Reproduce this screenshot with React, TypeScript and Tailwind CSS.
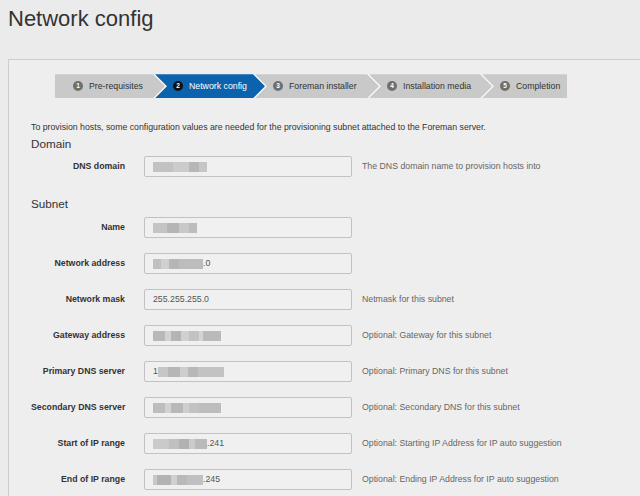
import React from "react"

type Seg = [number, string]

// pixelated (redacted) part of a value
const Blur: React.FC<{ segs: Seg[] }> = ({ segs }) => (
  <span className="inline-flex h-[10px] items-stretch">
    {segs.map(([w, c], i) => (
      <span key={i} className="h-full" style={{ width: w, backgroundColor: c }} />
    ))}
  </span>
)

const steps = [
  {
    n: 1,
    label: "Pre-requisites",
    cls: "w-[110px] [clip-path:polygon(0_0,calc(100%_-_12px)_0,100%_50%,calc(100%_-_12px)_100%,0_100%)]",
  },
  {
    n: 2,
    label: "Network config",
    active: true,
    cls: "w-[110px] -ml-[10px] [clip-path:polygon(0_0,calc(100%_-_12px)_0,100%_50%,calc(100%_-_12px)_100%,0_100%,12px_50%)]",
  },
  {
    n: 3,
    label: "Foreman installer",
    cls: "w-[124px] -ml-[10px] [clip-path:polygon(0_0,calc(100%_-_12px)_0,100%_50%,calc(100%_-_12px)_100%,0_100%,12px_50%)]",
  },
  {
    n: 4,
    label: "Installation media",
    cls: "w-[123px] -ml-[10px] [clip-path:polygon(0_0,calc(100%_-_12px)_0,100%_50%,calc(100%_-_12px)_100%,0_100%,12px_50%)]",
  },
  {
    n: 5,
    label: "Completion",
    cls: "w-[85px] -ml-[10px] [clip-path:polygon(0_0,100%_0,100%_100%,0_100%,12px_50%)]",
  },
]

const Stepper: React.FC = () => (
  <div className="ml-[46px] inline-flex h-[24px] bg-[#f6f6f6]">
    {steps.map((s) => (
      <div
        key={s.n}
        className={`${s.cls} ${
          s.active ? "bg-[#0b62ad] text-white" : "bg-[#c9c9c9] text-[#333]"
        } flex shrink-0 items-center pl-[18px]`}
      >
        <span
          className={`${
            s.active ? "bg-[#111]" : "bg-[#6f6f6f]"
          } flex h-[10px] w-[10px] items-center justify-center rounded-full text-[6.5px] font-bold leading-none text-white`}
        >
          {s.n}
        </span>
        <span className="ml-[6px] whitespace-nowrap text-[8.75px]">{s.label}</span>
      </div>
    ))}
  </div>
)

type Row = { label: string; value: React.ReactNode; help?: string }

const Field: React.FC<Row> = ({ label, value, help }) => (
  <div className="flex h-[21px] items-center">
    <div className="w-[94px] whitespace-nowrap text-right text-[8.75px] font-bold text-[#333]">
      {label}
    </div>
    <div className="ml-[19px] flex h-[21px] w-[208px] items-center rounded-[2px] border border-[#c2c2c2] bg-[#f0f0f0] pl-[8px] text-[8.75px] text-[#555]">
      {value}
    </div>
    {help && <div className="ml-[10px] whitespace-nowrap text-[8.75px] text-[#666]">{help}</div>}
  </div>
)

const subnet: Row[] = [
  {
    label: "Name",
    value: <Blur segs={[[14, "#c4c4c4"], [12, "#b5b5b5"], [10, "#c8c8c8"], [8, "#bcbcbc"]]} />,
  },
  {
    label: "Network address",
    value: (
      <>
        <Blur segs={[[8, "#c0c0c0"], [8, "#d0d0d0"], [10, "#b6b6b6"], [24, "#bdbdbd"]]} />
        <span>.0</span>
      </>
    ),
  },
  { label: "Network mask", value: "255.255.255.0", help: "Netmask for this subnet" },
  {
    label: "Gateway address",
    value: <Blur segs={[[12, "#b8b8b8"], [6, "#d2d2d2"], [10, "#b4b4b4"], [8, "#d0d0d0"], [10, "#c2c2c2"], [4, "#d4d4d4"], [18, "#bababa"]]} />,
    help: "Optional: Gateway for this subnet",
  },
  {
    label: "Primary DNS server",
    value: (
      <>
        <span>1</span>
        <Blur segs={[[10, "#c6c6c6"], [12, "#b6b6b6"], [8, "#cdcdcd"], [10, "#b8b8b8"], [26, "#c3c3c3"]]} />
      </>
    ),
    help: "Optional: Primary DNS for this subnet",
  },
  {
    label: "Secondary DNS server",
    value: <Blur segs={[[12, "#bdbdbd"], [6, "#d2d2d2"], [12, "#b8b8b8"], [6, "#cecece"], [10, "#c2c2c2"], [22, "#bdbdbd"]]} />,
    help: "Optional: Secondary DNS for this subnet",
  },
  {
    label: "Start of IP range",
    value: (
      <>
        <Blur segs={[[16, "#cacaca"], [10, "#c0c0c0"], [10, "#b2b2b2"], [6, "#cbcbcb"], [12, "#bababa"]]} />
        <span>.241</span>
      </>
    ),
    help: "Optional: Starting IP Address for IP auto suggestion",
  },
  {
    label: "End of IP range",
    value: (
      <>
        <Blur segs={[[4, "#c8c8c8"], [14, "#b3b3b3"], [6, "#cfcfcf"], [10, "#b9b9b9"], [16, "#c0c0c0"]]} />
        <span>.245</span>
      </>
    ),
    help: "Optional: Ending IP Address for IP auto suggestion",
  },
]

const App: React.FC = () => {
  return (
    <div className="flex h-[496px] w-[640px] flex-col overflow-hidden bg-[#ebebeb] font-['Liberation_Sans',Arial,sans-serif]">
      <header className="h-[59px] shrink-0 px-[8px] pt-[8px]">
        <h1 className="text-[22px] leading-[22.5px] text-[#333]">Network config</h1>
      </header>

      <div className="ml-[8px] flex-1 border-l border-t border-[#cdcdcd] bg-[#eeeeee] pt-[11px]">
        <Stepper />

        <div className="pl-[22px]">
          <p className="mt-[23px] text-[8.75px] leading-[12px] text-[#333]">
            To provision hosts, some configuration values are needed for the provisioning subnet
            attached to the Foreman server.
          </p>

          <h2 className="mt-[4px] text-[11.7px] leading-[14px] text-[#333]">Domain</h2>
          <div className="mt-[5px]">
            <Field
              label="DNS domain"
              value={<Blur segs={[[20, "#c2c2c2"], [16, "#cbcbcb"], [10, "#b7b7b7"], [8, "#c6c6c6"]]} />}
              help="The DNS domain name to provision hosts into"
            />
          </div>

          <h2 className="mt-[20px] text-[11.7px] leading-[14px] text-[#333]">Subnet</h2>
          <div className="mt-[6px] flex flex-col gap-[15px]">
            {subnet.map((r) => (
              <Field key={r.label} {...r} />
            ))}
          </div>
        </div>
      </div>
    </div>
  )
}

export default App
